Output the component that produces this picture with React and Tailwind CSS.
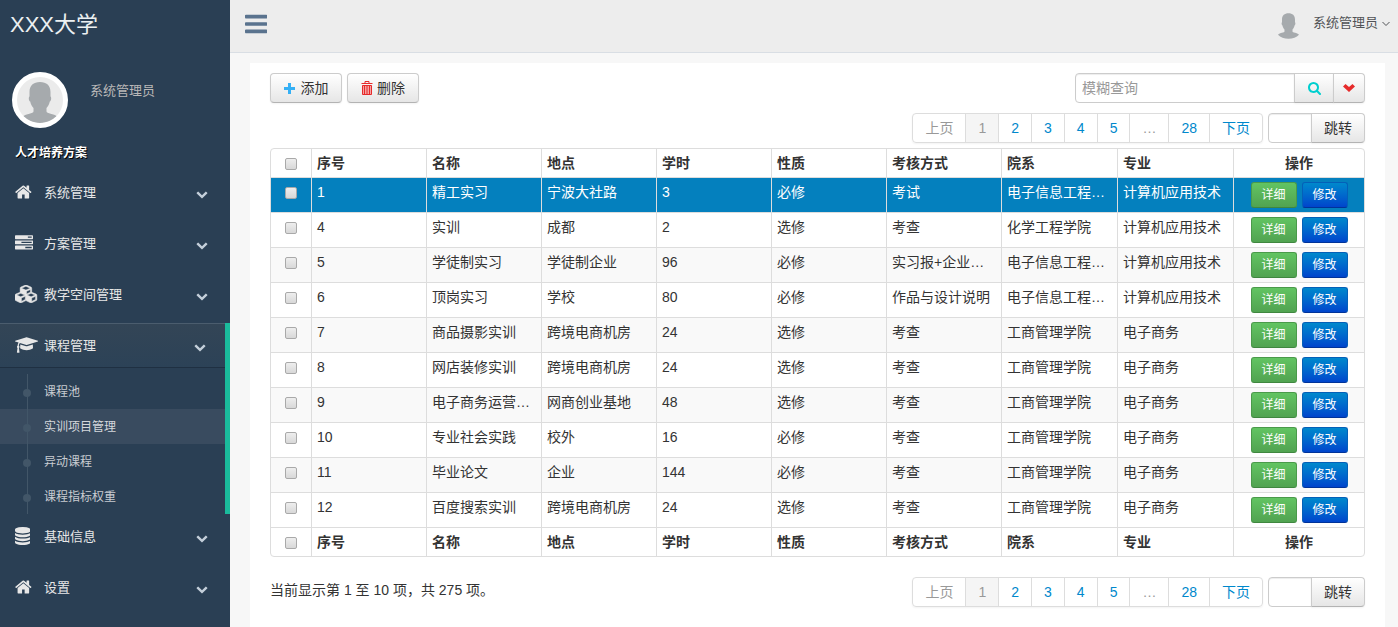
import React from "react";

const COLUMNS = ["序号", "名称", "地点", "学时", "性质", "考核方式", "院系", "专业"];

const ROWS = [
  ["1", "精工实习", "宁波大社路", "3", "必修", "考试", "电子信息工程…", "计算机应用技术"],
  ["4", "实训", "成都", "2", "选修", "考查", "化学工程学院", "计算机应用技术"],
  ["5", "学徒制实习", "学徒制企业", "96", "必修", "实习报+企业…", "电子信息工程…", "计算机应用技术"],
  ["6", "顶岗实习", "学校", "80", "必修", "作品与设计说明", "电子信息工程…", "计算机应用技术"],
  ["7", "商品摄影实训", "跨境电商机房", "24", "选修", "考查", "工商管理学院", "电子商务"],
  ["8", "网店装修实训", "跨境电商机房", "24", "选修", "考查", "工商管理学院", "电子商务"],
  ["9", "电子商务运营…", "网商创业基地", "48", "选修", "考查", "工商管理学院", "电子商务"],
  ["10", "专业社会实践", "校外", "16", "必修", "考查", "工商管理学院", "电子商务"],
  ["11", "毕业论文", "企业", "144", "必修", "考查", "工商管理学院", "电子商务"],
  ["12", "百度搜索实训", "跨境电商机房", "24", "选修", "考查", "工商管理学院", "电子商务"],
];

const ICONS = {
  home: {
    box: "64 0 1664 1792",
    d: "M1472 992v480q0 26-19 45t-45 19h-384v-384h-256v384h-384q-26 0-45-19t-19-45v-480q0-1 .5-3t.5-3l575-474 575 474q1 2 1 6zm223-69l-62 74q-8 9-21 11h-3q-13 0-21-7l-692-577-692 577q-12 8-24 7-13-2-21-11l-62-74q-8-10-7-23.5t11-21.5l719-599q32-26 76-26t76 26l244 204v-195q0-14 9-23t23-9h192q14 0 23 9t9 23v408l219 182q10 8 11 21.5t-7 23.5z",
  },
  tasks: {
    box: "0 0 1792 1792",
    d: "M1024 1408h640v-128h-640v128zm-384-512h1024v-128h-1024v128zm640-512h384v-128h-384v128zm512 832v256q0 26-19 45t-45 19h-1664q-26 0-45-19t-19-45v-256q0-26 19-45t45-19h1664q26 0 45 19t19 45zm0-512v256q0 26-19 45t-45 19h-1664q-26 0-45-19t-19-45v-256q0-26 19-45t45-19h1664q26 0 45 19t19 45zm0-512v256q0 26-19 45t-45 19h-1664q-26 0-45-19t-19-45v-256q0-26 19-45t45-19h1664q26 0 45 19t19 45z",
  },
  cubes: {
    box: "0 0 2304 1792",
    stroke: 50,
    d: "M640 1632l384-192v-314l-384 164v342zm-64-454l404-173-404-173-404 173zm1088 454l384-192v-314l-384 164v342zm-64-454l404-173-404-173-404 173zm-448-293l384-165v-266l-384 164v267zm-64-379l441-189-441-189-441 189zm1088 518v416q0 36-19 67t-52 47l-448 224q-25 14-57 14t-57-14l-448-224q-5-2-7-4-2 2-7 4l-448 224q-25 14-57 14t-57-14l-448-224q-33-16-52-47t-19-67v-416q0-38 21.5-70t56.5-48l434-186v-400q0-38 21.5-70t56.5-48l448-192q23-10 50-10t50 10l448 192q35 16 56.5 48t21.5 70v400l434 186q36 16 57 48t21 70z",
  },
  cap: {
    box: "0 0 2304 1792",
    d: "M1774 836l18 316q4 69-82 128t-235 93.5-323 34.5-323-34.5-235-93.5-82-128l18-316 574 181q22 7 48 7t48-7zm530-324q0 23-22 31l-1120 352q-4 1-10 1t-10-1l-652-206q-43 34-71 111.5t-34 178.5q63 36 63 109 0 69-58 107l58 433q2 14-8 25-9 11-24 11h-192q-15 0-24-11-10-11-8-25l58-433q-58-38-58-107 0-73 65-111 11-207 98-330l-333-104q-22-8-22-31t22-31l1120-352q4-1 10-1t10 1l1120 352q22 8 22 31z",
  },
  database: {
    box: "128 0 1536 1792",
    d: "M896 768q237 0 443-43t325-127v170q0 69-103 128t-280 93.5-385 34.5-385-34.5-280-93.5-103-128v-170q119 84 325 127t443 43zm0 768q237 0 443-43t325-127v170q0 69-103 128t-280 93.5-385 34.5-385-34.5-280-93.5-103-128v-170q119 84 325 127t443 43zm0-384q237 0 443-43t325-127v170q0 69-103 128t-280 93.5-385 34.5-385-34.5-280-93.5-103-128v-170q119 84 325 127t443 43zm0-1152q208 0 385 34.5t280 93.5 103 128v128q0 69-103 128t-280 93.5-385 34.5-385-34.5-280-93.5-103-128v-128q0-69 103-128t280-93.5 385-34.5z",
  },
  chevron: {
    box: "0 0 1792 1792",
    d: "M1683 808l-742 741q-19 19-45 19t-45-19l-742-741q-19-19-19-45.5t19-45.5l166-165q19-19 45-19t45 19l531 531 531-531q19-19 45-19t45 19l166 165q19 19 19 45.5t-19 45.5z",
  },
  bars: {
    box: "128 0 1536 1792",
    d: "M1664 1344v128q0 26-19 45t-45 19h-1408q-26 0-45-19t-19-45v-128q0-26 19-45t45-19h1408q26 0 45 19t19 45zm0-512v128q0 26-19 45t-45 19h-1408q-26 0-45-19t-19-45v-128q0-26 19-45t45-19h1408q26 0 45 19t19 45zm0-512v128q0 26-19 45t-45 19h-1408q-26 0-45-19t-19-45v-128q0-26 19-45t45-19h1408q26 0 45 19t19 45z",
  },
  search: {
    box: "64 128 1664 1664",
    d: "M1216 832q0-185-131.5-316.5t-316.5-131.5-316.5 131.5-131.5 316.5 131.5 316.5 316.5 131.5 316.5-131.5 131.5-316.5zm512 832q0 52-38 90t-90 38q-54 0-90-38l-343-342q-179 124-399 124-143 0-273.5-55.5t-225-150-150-225-55.5-273.5 55.5-273.5 150-225 225-150 273.5-55.5 273.5 55.5 225 150 150 225 55.5 273.5q0 220-124 399l343 343q37 37 37 90z",
  },
};

const MENU = [
  { label: "系统管理", icon: "home" },
  { label: "方案管理", icon: "tasks" },
  { label: "教学空间管理", icon: "cubes" },
  {
    label: "课程管理",
    icon: "cap",
    children: ["课程池", "实训项目管理", "异动课程", "课程指标权重"],
  },
  { label: "基础信息", icon: "database" },
  { label: "设置", icon: "home" },
];

const CURRENT = "实训项目管理";

const GRAY_BTN =
  "border border-[#ccc] border-b-[#b3b3b3] bg-linear-to-b from-white to-[#e6e6e6] text-[#333] shadow-[inset_0_1px_0_rgba(255,255,255,.2),0_1px_2px_rgba(0,0,0,.05)]";

function Icon({ name, className }) {
  const { box, d, stroke } = ICONS[name];
  return (
    <svg viewBox={box} className={className} fill="currentColor" aria-hidden="true">
      <path d={d} stroke={stroke ? "currentColor" : "none"} strokeWidth={stroke} />
    </svg>
  );
}

// head and shoulders
function Person({ className }) {
  return (
    <svg viewBox="0 0 34 41" className={className} fill="#a6aaad" aria-hidden="true">
      <path d="M17 0C10.500 0 6.500 3.500 6.500 10V14.500C5.400 15 5.600 19 7.200 19.500C7.800 22.500 9 24.500 10.500 26V29.500C10.500 31.500 3 31.500 0 34.500C4 38.500 10 41 17 41C24 41 30 38.500 34 34.500C31 31.500 23.500 31.500 23.500 29.500V26C25 24.500 26.200 22.500 26.800 19.500C28.400 19 28.600 15 27.500 14.500V10C27.500 3.500 23.500 0 17 0Z" />
    </svg>
  );
}

function SubMenu({ items }) {
  return (
    <ul className="pt-[6px]">
      {items.map((item) => (
        <li key={item}>
          <a
            href="#"
            className={
              item === CURRENT
                ? "flex h-[35px] items-center bg-[#394b5f] text-xs text-[#d5d8dc]"
                : "flex h-[35px] items-center text-xs text-[#c8ccd1]"
            }
          >
            {/* tree line with its dot */}
            <span className="relative ml-[27px] mr-4 h-full w-px bg-[#425668]">
              <span className="absolute -left-1 top-[15px] size-2 rounded-full bg-[#425668]" />
            </span>
            {item}
          </a>
        </li>
      ))}
    </ul>
  );
}

function Sidebar() {
  return (
    <aside className="w-[230px] shrink-0 bg-[#2a3f54]">
      <a href="#" className="flex h-[50px] items-center pl-[10px] text-[22px] text-[#ecf0f1]">
        XXX大学
      </a>
      <div className="flex pl-3 pt-[22px]">
        <div className="flex size-14 items-end justify-center overflow-hidden rounded-full border-[5px] border-white bg-[#ebebeb]">
          <Person className="h-[41px] w-[34px]" />
        </div>
        <span className="ml-[22px] pt-[9px] text-[13px] leading-5 text-[#bab8b8]">系统管理员</span>
      </div>
      <h3 className="mb-[7px] mt-[15px] pl-[15px] text-xs font-bold leading-5 text-white [text-shadow:1px_1px_#000]">
        人才培养方案
      </h3>
      <nav>
        <ul>
          {MENU.map(({ label, icon, children }) => (
            <li key={label} className={children ? "border-r-[5px] border-[#1abb9c]" : "mb-[6px]"}>
              <a
                href="#"
                className={
                  children
                    ? "flex h-[45px] items-center border-b border-t border-b-[#1f3042] border-t-[#4b5d6e] bg-linear-to-b from-[#334556] to-[#2c4257] pl-[15px] pr-[19px] text-[13px] text-[#e7e7e7]"
                    : "flex h-[45px] items-center pl-[15px] pr-[22px] text-[13px] text-[#e7e7e7]"
                }
              >
                <span className="w-[29px] shrink-0 pb-[2px]">
                  <Icon name={icon} className="h-[18px] w-auto" />
                </span>
                <span className="flex-1 pt-[2px]">{label}</span>
                <Icon name="chevron" className="mt-[3px] size-3 text-[#c4cfda]" />
              </a>
              {children && <SubMenu items={children} />}
            </li>
          ))}
        </ul>
      </nav>
    </aside>
  );
}

function TopBar() {
  return (
    <header className="flex h-[53px] items-center justify-between border-b border-[#d9dee4] bg-[#ededed] pb-[5px] pl-[15px] pr-2">
      <button type="button" aria-label="切换菜单" className="text-[#5a738e]">
        <Icon name="bars" className="h-[26px] w-auto" />
      </button>
      <button type="button" className="flex items-center text-[13px] text-[#515356]">
        <Person className="mr-[14px] mt-1 h-[26px] w-[21px]" />
        系统管理员
        <svg viewBox="0 0 8 6" className="ml-1 h-[6px] w-2" fill="none" stroke="currentColor" aria-hidden="true">
          <path d="M.5 1L4 4.500L7.500 1" />
        </svg>
      </button>
    </header>
  );
}

function Toolbar() {
  return (
    <div className="flex justify-between">
      <div className="flex gap-[5px]">
        <button type="button" className={`flex h-[30px] w-[72px] items-center justify-center gap-[6px] rounded ${GRAY_BTN}`}>
          <svg viewBox="0 0 11 11" className="size-[11px]" fill="#35b0f5" aria-hidden="true">
            <path d="M4 0h3v4h4v3H7v4H4V7H0V4h4z" />
          </svg>
          添加
        </button>
        <button type="button" className={`flex h-[30px] w-[72px] items-center justify-center gap-1 rounded ${GRAY_BTN}`}>
          <svg viewBox="0 0 12 14" className="h-[14px] w-3" aria-hidden="true">
            <path d="M1.500 4h9v9.500h-9z" fill="#f6a3a3" />
            <path d="M.5 2.500h11M4 2V.5h4V2M1.500 4.500h9v9h-9zM3.500 4.500v9M6 4.500v9M8.500 4.500v9" fill="none" stroke="#e62b2b" />
          </svg>
          删除
        </button>
      </div>
      <form className="flex" onSubmit={(e) => e.preventDefault()}>
        <input
          type="text"
          aria-label="模糊查询"
          placeholder="模糊查询"
          className="h-[30px] w-[220px] rounded-l border border-[#ccc] bg-white px-[6px] shadow-[inset_0_1px_1px_rgba(0,0,0,.075)] placeholder:text-[#999]"
        />
        <button type="submit" aria-label="查询" className={`-ml-px flex h-[30px] w-10 items-center justify-center ${GRAY_BTN}`}>
          <Icon name="search" className="size-[13px] text-[#00cfcf]" />
        </button>
        <button type="button" aria-label="高级查询" className={`-ml-px flex h-[30px] w-8 items-center justify-center rounded-r ${GRAY_BTN}`}>
          <svg viewBox="0 0 12 8" className="h-2 w-3" fill="#e62b2b" aria-hidden="true">
            <path d="M0 2.500L2.500 0L6 3L9.500 0L12 2.500L6 8Z" />
          </svg>
        </button>
      </form>
    </div>
  );
}

function Pagination() {
  return (
    <div className="flex gap-[5px]">
      <nav
        aria-label="分页"
        className="flex h-[30px] divide-x divide-[#ddd] rounded border border-[#ddd] leading-7 text-[#08c] shadow-[0_1px_2px_rgba(0,0,0,.05)]"
      >
        <span className="px-3 text-[#999]">上页</span>
        <span className="bg-[#f5f5f5] px-3 text-[#999]" aria-current="page">1</span>
        {["2", "3", "4", "5"].map((n) => (
          <a key={n} href="#" className="px-3">{n}</a>
        ))}
        <span className="px-3 text-[#999]">…</span>
        <a href="#" className="px-3">28</a>
        <a href="#" className="px-3">下页</a>
      </nav>
      <form className="flex" onSubmit={(e) => e.preventDefault()}>
        <input
          type="text"
          aria-label="页码"
          className="h-[30px] w-11 rounded-l border border-[#ccc] bg-white px-[6px] shadow-[inset_0_1px_1px_rgba(0,0,0,.075)]"
        />
        <button type="submit" className={`-ml-px h-[30px] w-[54px] rounded-r ${GRAY_BTN}`}>跳转</button>
      </form>
    </div>
  );
}

function Check({ label }) {
  return (
    <input
      type="checkbox"
      aria-label={label}
      className="mx-auto mt-[5px] block size-3 appearance-none rounded-[2px] border border-[#a9a9a9] bg-linear-to-b from-[#eee] to-[#d8d8d8]"
    />
  );
}

const CELL = "border-l border-t border-[#ddd] px-[5px] py-1 align-top first:border-l-0";

function HeadRow({ first }) {
  const cell = first
    ? "border-l border-[#ddd] px-[5px] py-1 text-left align-top font-bold first:border-l-0"
    : "border-l border-t border-[#ddd] px-[5px] py-1 text-left align-top font-bold first:border-l-0";
  return (
    <tr>
      <th className={cell}><Check label="全选" /></th>
      {COLUMNS.map((name) => (
        <th key={name} className={cell}>{name}</th>
      ))}
      <th className={cell}><div className="text-center">操作</div></th>
    </tr>
  );
}

function CourseTable() {
  return (
    <div className="mt-[5px] overflow-hidden rounded border border-[#ddd]">
      <table className="w-full table-fixed border-separate border-spacing-0 leading-5">
        <colgroup>
          <col className="w-10" />
          {/* the last two text columns take the spare width */}
          {COLUMNS.map((name, i) => (
            <col key={name} className={i < 6 ? "w-[115px]" : undefined} />
          ))}
          <col className="w-[131px]" />
        </colgroup>
        <thead>
          <HeadRow first />
        </thead>
        <tbody>
          {ROWS.map((row, i) => (
            <tr key={row[0]} className={i === 0 ? "bg-[#0480be] text-white" : i % 2 === 0 ? "bg-[#f9f9f9]" : "bg-white"}>
              <td className={CELL}><Check label={`选择 ${row[1]}`} /></td>
              {row.map((value, c) => (
                <td key={c} className={`${CELL} truncate`}>{value}</td>
              ))}
              <td className={CELL}>
                <div className="flex justify-center gap-[5px] text-xs text-white [text-shadow:0_-1px_0_rgba(0,0,0,.25)]">
                  <button
                    type="button"
                    className="h-[26px] w-[46px] rounded-[3px] border border-[#4a9a4a] border-b-[#3f873f] bg-linear-to-b from-[#62c462] to-[#51a351]"
                  >
                    详细
                  </button>
                  <button
                    type="button"
                    className="h-[26px] w-[46px] rounded-[3px] border border-[#0460b8] border-b-[#003399] bg-linear-to-b from-[#08c] to-[#04c]"
                  >
                    修改
                  </button>
                </div>
              </td>
            </tr>
          ))}
        </tbody>
        <tfoot>
          <HeadRow />
        </tfoot>
      </table>
    </div>
  );
}

export default function App() {
  return (
    <div className="flex min-h-screen bg-[#f7f7f7] font-['Liberation_Sans','Noto_Sans_CJK_SC',sans-serif] text-sm text-[#333]">
      <Sidebar />
      <div className="flex min-w-0 flex-1 flex-col">
        <TopBar />
        <main className="ml-5 mr-[13px] mt-[10px] flex-1 bg-white px-5 pb-5 pt-[10px]">
          <Toolbar />
          <div className="mt-[10px] flex justify-end">
            <Pagination />
          </div>
          <CourseTable />
          <div className="mt-5 flex items-start justify-between">
            <p className="pt-[3px] leading-5">当前显示第 1 至 10 项，共 275 项。</p>
            <Pagination />
          </div>
        </main>
      </div>
    </div>
  );
}
